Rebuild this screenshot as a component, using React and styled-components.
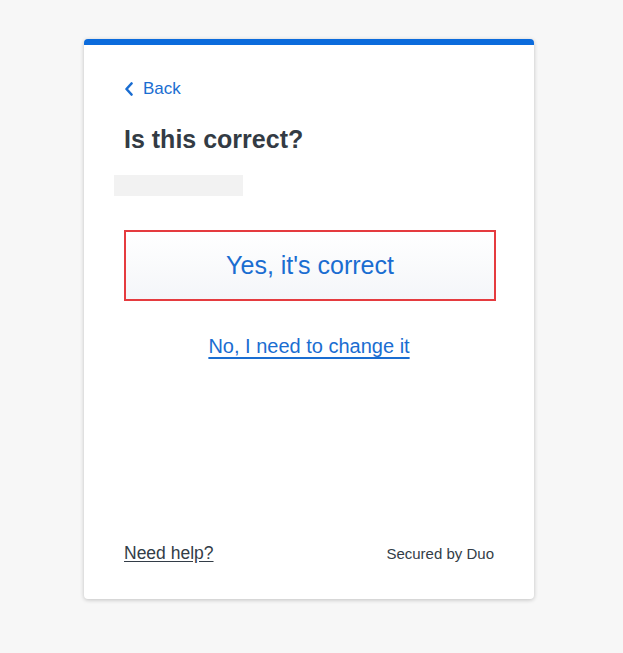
import React from "react";
import styled, { createGlobalStyle } from "styled-components";

const Global = createGlobalStyle`
  html, body { margin: 0; padding: 0; background: #f7f7f7; }
  body { font-family: "Liberation Sans", Arial, sans-serif; }
`;

const Page = styled.div`
  width: 623px;
  height: 653px;
  display: flex;
  justify-content: flex-start;
  padding: 39px 0 0 84px;
  box-sizing: border-box;
`;

const Card = styled.div`
  width: 450px;
  height: 560px;
  background: #fff;
  border-radius: 4px;
  border-top: 6px solid #0b6bdc;
  box-shadow: 0 1px 4px rgba(0, 0, 0, 0.22);
  box-sizing: border-box;
  padding: 34px 40px 35px 40px;
  display: flex;
  flex-direction: column;
`;

const BackLink = styled.a`
  display: flex;
  align-items: center;
  gap: 9px;
  color: #1a6dd1;
  font-size: 17px;
  text-decoration: none;
  height: 20px;
  cursor: pointer;
`;

const Heading = styled.h1`
  margin: 26px 0 0 0;
  font-size: 25px;
  font-weight: 700;
  color: #333b44;
  line-height: 28px;
`;

const Redacted = styled.div`
  margin: 22px 0 0 -10px;
  width: 129px;
  height: 21px;
  background: #f2f2f2;
`;

const PrimaryButton = styled.button`
  margin-top: 34px;
  width: 372px;
  height: 71px;
  border: 2px solid #e53b3f;
  background: linear-gradient(#ffffff, #f4f6f9);
  color: #1a6dd1;
  font-family: inherit;
  font-size: 25px;
  cursor: pointer;
  box-sizing: border-box;
`;

const SecondaryLink = styled.a`
  align-self: center;
  margin-top: 34px;
  color: #1a6dd1;
  font-size: 20px;
  text-decoration: underline;
  text-underline-offset: 4px;
  text-decoration-thickness: 2px;
  cursor: pointer;
`;

const Footer = styled.div`
  margin-top: auto;
  display: flex;
  justify-content: space-between;
  align-items: center;
`;

const HelpLink = styled.a`
  color: #333d47;
  font-size: 17.5px;
  text-decoration: underline;
  text-underline-offset: 2px;
  cursor: pointer;
`;

const Secured = styled.span`
  color: #333d47;
  font-size: 15px;
`;

const Chevron = () => (
  <svg width="10" height="14" viewBox="0 0 10 14">
    <path d="M7.5 1.5 L2.5 7 L7.5 12.5" fill="none" stroke="#1a6dd1" strokeWidth="2.6" strokeLinecap="round" strokeLinejoin="round" />
  </svg>
);

export default function App() {
  return (
    <>
      <Global />
      <Page>
        <Card>
          <BackLink>
            <Chevron />
            Back
          </BackLink>
          <Heading>Is this correct?</Heading>
          <Redacted />
          <PrimaryButton>Yes, it's correct</PrimaryButton>
          <SecondaryLink>No, I need to change it</SecondaryLink>
          <Footer>
            <HelpLink>Need help?</HelpLink>
            <Secured>Secured by Duo</Secured>
          </Footer>
        </Card>
      </Page>
    </>
  );
}
